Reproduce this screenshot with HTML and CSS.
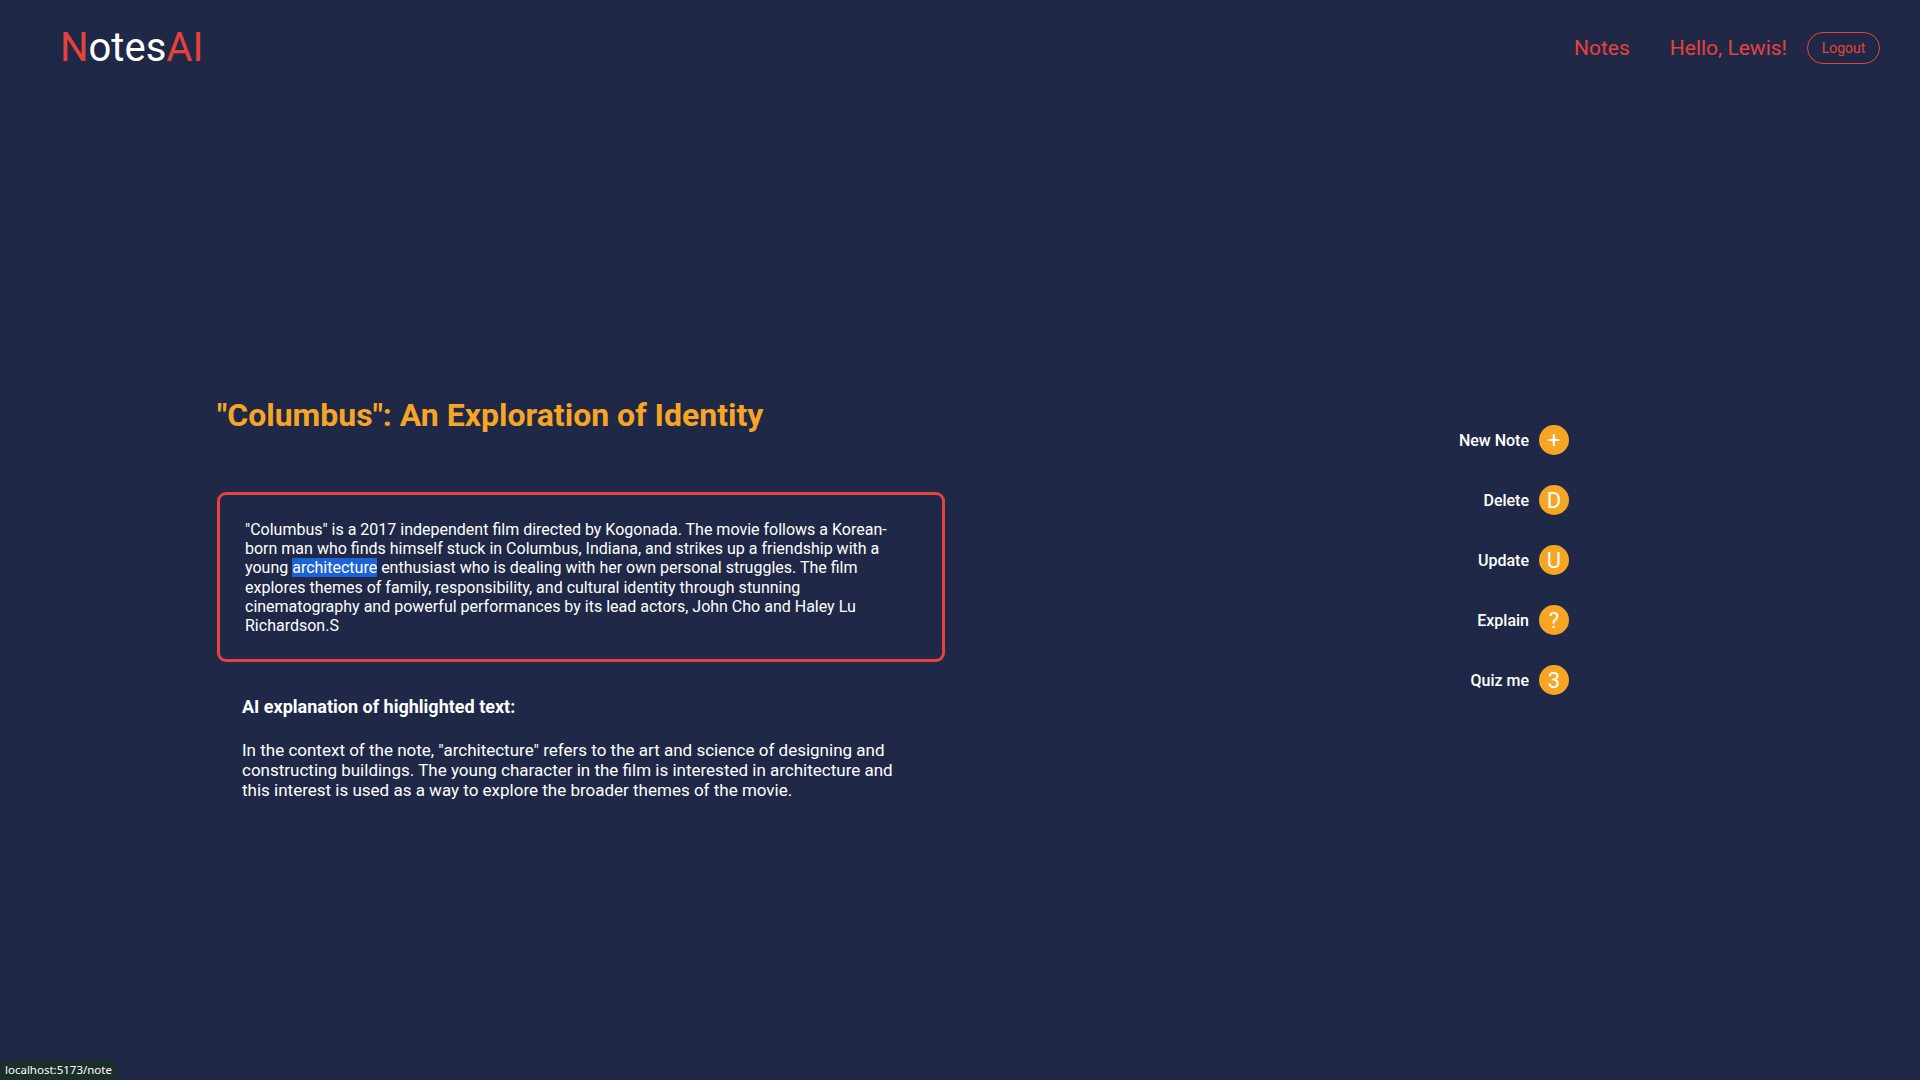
FILE: index.html
```html
<!DOCTYPE html>
<html lang="en">
<head>
<meta charset="utf-8">
<title>NotesAI</title>
<link rel="stylesheet" href="styles.css">
</head>
<body>
<header class="topbar">
  <div class="logo"><span class="red">N</span>otes<span class="red">AI</span></div>
  <nav class="nav">
    <a class="nav-link" href="#">Notes</a>
    <span class="nav-hello">Hello, Lewis!</span>
    <button class="logout">Logout</button>
  </nav>
</header>
<main class="main">
  <section class="note">
    <h1 class="note-title">"Columbus": An Exploration of Identity</h1>
    <div class="note-box">
      <p class="note-text">"Columbus" is a 2017 independent film directed by Kogonada. The movie follows a Korean-born man who finds himself stuck in Columbus, Indiana, and strikes up a friendship with a young <span class="hl">architecture</span> enthusiast who is dealing with her own personal struggles. The film explores themes of family, responsibility, and cultural identity through stunning cinematography and powerful performances by its lead actors, John Cho and Haley Lu Richardson.S</p>
    </div>
    <div class="explain">
      <h2 class="explain-title">AI explanation of highlighted text:</h2>
      <p class="explain-text">In the context of the note, "architecture" refers to the art and science of designing and constructing buildings. The young character in the film is interested in architecture and this interest is used as a way to explore the broader themes of the movie.</p>
    </div>
  </section>
  <aside class="actions">
    <div class="action"><span class="action-label">New Note</span><span class="action-btn">+</span></div>
    <div class="action"><span class="action-label">Delete</span><span class="action-btn">D</span></div>
    <div class="action"><span class="action-label">Update</span><span class="action-btn">U</span></div>
    <div class="action"><span class="action-label">Explain</span><span class="action-btn">?</span></div>
    <div class="action"><span class="action-label">Quiz me</span><span class="action-btn">3</span></div>
  </aside>
</main>
<div class="status">localhost:5173/note</div>
</body>
</html>
```

FILE: styles.css
```css
* { box-sizing: border-box; }
html, body { height: 100%; }
body {
  margin: 0;
  background: #1f2947;
  color: #ffffff;
  font-family: Roboto, "Noto Sans", sans-serif;
}
.red { color: #e5423c; }
.topbar {
  display: flex;
  align-items: center;
  justify-content: space-between;
  height: 94px;
  padding: 2px 40px 0 60px;
}
.logo {
  font-size: 40px;
  line-height: 1;
  color: #ffffff;
}
.nav { display: flex; align-items: center; }
.nav-link, .nav-hello {
  color: #e5423c;
  font-size: 21px;
  text-decoration: none;
}
.nav-link { margin-right: 40px; }
.nav-hello { margin-right: 20px; }
.logout {
  width: 73px;
  height: 32px;
  border: 1px solid #e5423c;
  border-radius: 16px;
  background: transparent;
  color: #e5423c;
  font-family: Roboto, sans-serif;
  font-size: 14px;
  padding: 0;
}
.main {
  display: flex;
  justify-content: space-between;
  padding: 301px 351px 0 217px;
}
.note { width: 730px; }
.note-title {
  margin: 0;
  font-size: 32px;
  line-height: 40px;
  font-weight: 700;
  color: #f6a524;
}
.note-box {
  margin-top: 57px;
  width: 728px;
  height: 170px;
  border: 3px solid #e5423c;
  border-radius: 9px;
  padding: 25px 24px 24px 25px;
}
.note-text {
  margin: 0;
  max-width: 658px;
  font-size: 16px;
  line-height: 19.2px;
}
.hl { background: #1d63d8; }
.explain { padding: 34px 0 0 25px; }
.explain-title {
  margin: 0;
  font-size: 18px;
  line-height: 22px;
  font-weight: 700;
}
.explain-text {
  margin: 22px 0 0;
  max-width: 666px;
  font-size: 17px;
  line-height: 20.2px;
}
.actions {
  display: flex;
  flex-direction: column;
  align-items: flex-end;
  gap: 30px;
  padding-top: 30px;
}
.action { display: flex; align-items: center; gap: 10px; }
.action-label { font-size: 16px; font-weight: 500; }
.action-btn {
  width: 30px;
  height: 30px;
  border-radius: 50%;
  background: #f6a524;
  color: #ffffff;
  display: flex;
  align-items: center;
  justify-content: center;
  font-size: 22px;
}
.status {
  position: fixed;
  left: 0;
  bottom: 0;
  padding: 2px 5px 3px 5px;
  background: #1c2e2c;
  color: #ffffff;
  font-family: "Noto Sans", "Liberation Sans", sans-serif;
  font-size: 11.5px;
  border-top-right-radius: 4px;
}
```
